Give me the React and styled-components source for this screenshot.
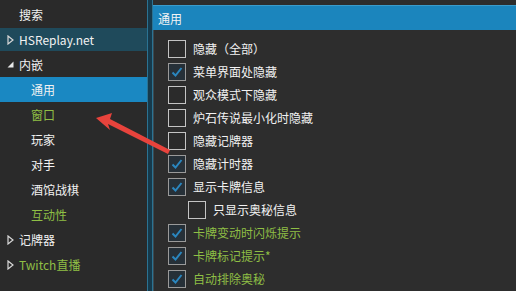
import React from "react";
import styled, { createGlobalStyle } from "styled-components";

const Global = createGlobalStyle`
  html, body {
    margin: 0;
    padding: 0;
    background: #2b2b2b;
  }
  * { box-sizing: border-box; }
`;

const GREEN = "#8fbf45";

const Page = styled.div`
  position: relative;
  width: 516px;
  height: 291px;
  overflow: hidden;
  display: flex;
  background: #2b2b2b;
  font-family: "Microsoft YaHei", "Noto Sans CJK SC", "Noto Sans", sans-serif;
  font-size: 12px;
  color: #f2f2f2;
`;

const Sidebar = styled.div`
  width: 147px;
  padding-top: 2px;
  display: flex;
  flex-direction: column;
  background: #2a2a2a;
`;

const NavRow = styled.div`
  height: 25px;
  display: flex;
  align-items: center;
  padding-left: ${(p) => (p.$sub ? 31 : 7)}px;
  color: ${(p) => (p.$green ? GREEN : "#f2f2f2")};
  background: ${(p) =>
    p.$selected ? "#1a88c2" : p.$hover ? "#1f4a5b" : "transparent"};
  margin: ${(p) => (p.$hover ? "1px 0" : "0")};
  height: ${(p) => (p.$hover ? 23 : 25)}px;
`;

const Caret = styled.span`
  width: 12px;
  display: inline-flex;
  align-items: center;
  svg { display: block; }
`;

const Divider = styled.div`
  width: 6px;
  background: #163a4c;
  border-left: 1px solid #2b7393;
  border-right: 1px solid #2b7393;
`;

const Panel = styled.div`
  flex: 1;
  padding-top: 5px;
  display: flex;
  flex-direction: column;
  background: #2d2d2d;
`;

const PanelHeader = styled.div`
  height: 25px;
  display: flex;
  align-items: center;
  padding-left: 5px;
  background: #1b85bd;
  color: #f4f4f4;
  border-top: 1px solid #3a9ccc;
`;

const OptionList = styled.div`
  padding-top: 7px;
  padding-left: 14px;
  display: flex;
  flex-direction: column;
  border-left: 1px solid #3b4a52;
  flex: 1;
`;

const Option = styled.div`
  height: 23px;
  display: flex;
  align-items: center;
  gap: 7px;
  padding-left: ${(p) => (p.$indent ? 20 : 0)}px;
  color: ${(p) => (p.$green ? GREEN : "#f2f2f2")};
`;

const Box = styled.span`
  width: 18px;
  height: 18px;
  border: 1px solid ${(p) => (p.$checked ? "#9a9a9a" : "#c4c4c4")};
  background: ${(p) => (p.$checked ? "#263038" : "#2b2b2b")};
  display: inline-flex;
  align-items: center;
  justify-content: center;
  flex-shrink: 0;
`;

const Arrow = styled.svg`
  position: absolute;
  left: 0;
  top: 0;
  pointer-events: none;
`;

const Hollow = () => (
  <svg width="7" height="10" viewBox="0 0 7 10">
    <path d="M1 1 L6 5 L1 9 Z" fill="none" stroke="#d8d8d8" strokeWidth="1.2" />
  </svg>
);

const Open = () => (
  <svg width="7" height="7" viewBox="0 0 7 7">
    <path d="M6.5 0.5 L6.5 6.5 L0.5 6.5 Z" fill="#e8e8e8" />
  </svg>
);

const Check = () => (
  <svg width="14" height="14" viewBox="0 0 14 14">
    <path d="M2.5 7.5 L5.5 10.5 L11.5 3" fill="none" stroke="#2a86bf" strokeWidth="2" />
  </svg>
);

const nav = [
  { text: "搜索", caret: null },
  { text: "HSReplay.net", caret: "closed", hover: true },
  { text: "内嵌", caret: "open" },
  { text: "通用", sub: true, selected: true },
  { text: "窗口", sub: true, green: true },
  { text: "玩家", sub: true },
  { text: "对手", sub: true },
  { text: "酒馆战棋", sub: true },
  { text: "互动性", sub: true, green: true },
  { text: "记牌器", caret: "closed" },
  { text: "Twitch直播", caret: "closed", green: true },
];

const options = [
  { text: "隐藏（全部）" },
  { text: "菜单界面处隐藏", checked: true },
  { text: "观众模式下隐藏" },
  { text: "炉石传说最小化时隐藏" },
  { text: "隐藏记牌器" },
  { text: "隐藏计时器", checked: true },
  { text: "显示卡牌信息", checked: true },
  { text: "只显示奥秘信息", indent: true },
  { text: "卡牌变动时闪烁提示", checked: true, green: true },
  { text: "卡牌标记提示*", checked: true, green: true },
  { text: "自动排除奥秘", checked: true, green: true },
];

export default function App() {
  return (
    <>
      <Global />
      <Page>
        <Sidebar>
          {nav.map((n) => (
            <NavRow
              key={n.text}
              $sub={n.sub}
              $green={n.green}
              $selected={n.selected}
              $hover={n.hover}
            >
              {!n.sub && (
                <Caret>
                  {n.caret === "closed" && <Hollow />}
                  {n.caret === "open" && <Open />}
                </Caret>
              )}
              {n.text}
            </NavRow>
          ))}
        </Sidebar>
        <Divider />
        <Panel>
          <PanelHeader>通用</PanelHeader>
          <OptionList>
            {options.map((o) => (
              <Option key={o.text} $indent={o.indent} $green={o.green}>
                <Box $checked={o.checked}>{o.checked && <Check />}</Box>
                {o.text}
              </Option>
            ))}
          </OptionList>
        </Panel>
        <Arrow width="516" height="291" viewBox="0 0 516 291">
          <path
            d="M96 118 L112 113 L110 119 L170 150 L168 154 L108 124 L110 130 Z"
            fill="#e8433c"
          />
        </Arrow>
      </Page>
    </>
  );
}
